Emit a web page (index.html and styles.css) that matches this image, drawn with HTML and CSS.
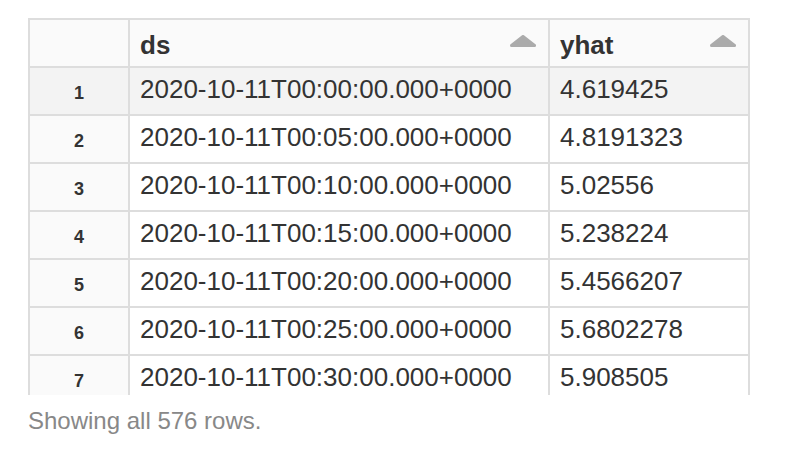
FILE: index.html
```html
<!DOCTYPE html>
<html>
<head>
<meta charset="utf-8">
<link rel="stylesheet" href="styles.css">
</head>
<body>
<div class="page">
  <div class="table-wrap">
    <table class="grid">
      <thead>
        <tr>
          <th class="idx"></th>
          <th class="col-ds"><div class="head"><span>ds</span><svg class="sort" width="26" height="12" viewBox="0 0 26 12"><polygon points="13,1.5 24.5,10.5 1.5,10.5" fill="#ababab" stroke="#ababab" stroke-width="3" stroke-linejoin="round"/></svg></div></th>
          <th class="col-yhat"><div class="head"><span>yhat</span><svg class="sort" width="26" height="12" viewBox="0 0 26 12"><polygon points="13,1.5 24.5,10.5 1.5,10.5" fill="#ababab" stroke="#ababab" stroke-width="3" stroke-linejoin="round"/></svg></div></th>
        </tr>
      </thead>
      <tbody>
        <tr class="hl"><td class="idx">1</td><td>2020-10-11T00:00:00.000+0000</td><td>4.619425</td></tr>
        <tr><td class="idx">2</td><td>2020-10-11T00:05:00.000+0000</td><td>4.8191323</td></tr>
        <tr><td class="idx">3</td><td>2020-10-11T00:10:00.000+0000</td><td>5.02556</td></tr>
        <tr><td class="idx">4</td><td>2020-10-11T00:15:00.000+0000</td><td>5.238224</td></tr>
        <tr><td class="idx">5</td><td>2020-10-11T00:20:00.000+0000</td><td>5.4566207</td></tr>
        <tr><td class="idx">6</td><td>2020-10-11T00:25:00.000+0000</td><td>5.6802278</td></tr>
        <tr><td class="idx">7</td><td>2020-10-11T00:30:00.000+0000</td><td>5.908505</td></tr>
      </tbody>
    </table>
  </div>
  <div class="footer">Showing all 576 rows.</div>
</div>
</body>
</html>
```
FILE: styles.css
```css
html, body {
  margin: 0;
  padding: 0;
  background: #ffffff;
}

.page {
  padding: 18px 0 0 28px;
  font-family: "Liberation Sans", Arial, Helvetica, sans-serif;
  color: #333333;
}

.table-wrap {
  width: 722px;
  height: 377px;
  overflow: hidden;
}

.grid {
  border-collapse: separate;
  border-spacing: 0;
  table-layout: fixed;
  width: 722px;
  border-top: 2px solid #dddddd;
  border-left: 2px solid #dddddd;
}

.grid th,
.grid td {
  box-sizing: border-box;
  border-right: 2px solid #dddddd;
  border-bottom: 2px solid #dddddd;
  font-size: 26px;
  line-height: 30px;
  padding: 6px 12px 10px 10px;
  vertical-align: top;
  text-align: left;
  white-space: nowrap;
  background: #ffffff;
}

.grid th {
  padding-top: 10px;
  padding-bottom: 6px;
  font-weight: bold;
  background: #fafafa;
}

.grid th.idx {
  width: 100px;
}

.grid th.col-ds {
  width: 420px;
}

.grid th.col-yhat {
  width: 200px;
}

.head {
  display: flex;
  justify-content: space-between;
  align-items: flex-start;
}

.sort {
  display: block;
  margin-top: 5px;
}

.grid td.idx {
  font-size: 18px;
  font-weight: bold;
  text-align: center;
  padding: 10px 0 6px 0;
  background: #fafafa;
}

.grid tr.hl td {
  background: #f3f3f3;
}

.footer {
  margin-top: 8px;
  font-size: 24px;
  line-height: 36px;
  color: #888888;
}
```
